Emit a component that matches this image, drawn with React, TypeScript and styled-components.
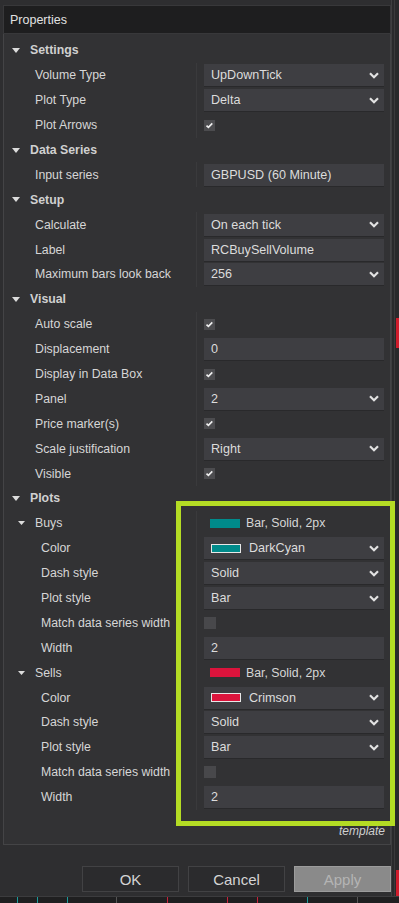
import styled, { createGlobalStyle } from 'styled-components'

const GlobalStyle = createGlobalStyle`
  body {
    margin: 0;
    background: #2a2a2c;
    font-family: "Liberation Sans", Arial, sans-serif;
  }
`

const Screen = styled.div`
  position: relative;
  width: 399px;
  height: 903px;
  display: flex;
  flex-direction: column;
  overflow: hidden;
  background: #2a2a2c;
`

const Top = styled.div`
  display: flex;
  height: 897px;
`

const Dialog = styled.div`
  width: 388px;
  padding: 5px 0 0 3px;
  display: flex;
  flex-direction: column;
  background: #2e2e30;
  border-right: 1px solid #3e3e40;
`

const Sliver = styled.div`
  position: relative;
  flex: 1;
  background: #29292b;
  border-left: 1px solid #3a3a3c;
  margin-left: 2px;
`

const ChartMark = styled.div<{ $top: number; $height: number }>`
  position: absolute;
  right: 0;
  top: ${p => p.$top}px;
  width: 3px;
  height: ${p => p.$height}px;
  background: #d01c2c;
`

const TitleBar = styled.div`
  height: 27px;
  display: flex;
  align-items: center;
  padding-left: 6px;
  background: #1e1e1f;
  border: 1px solid #38383a;
  color: #e2e2e2;
  font-size: 12.5px;
`

const Grid = styled.div`
  height: 806px;
  display: flex;
  flex-direction: column;
  padding-top: 4px;
  border: 1px solid #444446;
  border-top: none;
  background: #323234;
`

const Row = styled.div`
  height: 24.9px;
  display: grid;
  grid-template-columns: 192px 1fr;
  align-items: stretch;
`

const Label = styled.div<{ $indent: number; $bold?: boolean }>`
  display: flex;
  align-items: center;
  gap: 10px;
  padding-left: ${p => p.$indent}px;
  color: ${p => (p.$bold ? '#d0d0d0' : '#d6d6d6')};
  font-size: 12.3px;
  font-weight: ${p => (p.$bold ? 700 : 400)};
  white-space: nowrap;
`

const Value = styled.div<{ $line?: boolean }>`
  display: flex;
  align-items: center;
  padding: 0 6px 0 7px;
  border-left: 1px solid ${p => (p.$line ? '#3a3a3c' : 'transparent')};
`

const Box = styled.div`
  flex: 1;
  height: 22px;
  display: flex;
  align-items: center;
  gap: 8px;
  padding: 0 5px 0 7px;
  background: #3e3e42;
  box-shadow: 0 1px 0 #29292b;
  color: #dcdcdc;
  font-size: 12.6px;
`

const BoxText = styled.span`
  flex: 1;
`

const Swatch = styled.span<{ $color: string; $framed?: boolean }>`
  width: ${p => (p.$framed ? 28 : 30)}px;
  height: ${p => (p.$framed ? 7 : 9)}px;
  background: ${p => p.$color};
  border: ${p => (p.$framed ? '1px solid #e8e8e8' : 'none')};
  flex-shrink: 0;
`

const Summary = styled.div`
  display: flex;
  align-items: center;
  gap: 6px;
  padding-left: 6px;
  color: #d6d6d6;
  font-size: 12.3px;
`

const Template = styled.div`
  margin-top: auto;
  padding: 0 5px 6px 0;
  text-align: right;
  color: #cfcfcf;
  font-size: 12px;
  font-style: italic;
`

const Footer = styled.div`
  display: flex;
  justify-content: flex-end;
  gap: 9px;
  padding: 21px 0 0;
`

const Button = styled.div<{ $disabled?: boolean }>`
  width: 95px;
  height: 24px;
  display: flex;
  align-items: center;
  justify-content: center;
  background: ${p => (p.$disabled ? '#8a8a8a' : '#2b2b2d')};
  border: 1px solid ${p => (p.$disabled ? '#9c9c9c' : '#424244')};
  color: ${p => (p.$disabled ? '#b4b4b4' : '#d4d4d4')};
  font-size: 15px;
`

const Bottom = styled.div`
  position: relative;
  height: 6px;
  background: #1f1f20;
  border-top: 1px solid #3c3c3e;
`

const Tick = styled.div<{ $x: number; $color: string }>`
  position: absolute;
  left: ${p => p.$x}px;
  top: 0;
  width: 1px;
  height: 6px;
  background: ${p => p.$color};
`

const Highlight = styled.div`
  position: absolute;
  left: 176px;
  top: 501px;
  width: 209px;
  height: 315px;
  border: 5px solid #b4dc24;
  pointer-events: none;
`

function Caret({ small }: { small?: boolean }) {
  const w = small ? 7 : 8
  const h = small ? 4 : 5
  return (
    <svg width={w} height={h} viewBox={`0 0 ${w} ${h}`}>
      <polygon points={`0,0 ${w},0 ${w / 2},${h}`} fill="#dcdcdc" />
    </svg>
  )
}

function Chevron() {
  return (
    <svg width="10" height="7" viewBox="0 0 10 7">
      <polyline points="1,1.2 5,5.2 9,1.2" fill="none" stroke="#e2e2e2" strokeWidth="2.2" />
    </svg>
  )
}

function Check({ on }: { on: boolean }) {
  if (!on) {
    return (
      <svg width="12" height="12" viewBox="0 0 12 12">
        <rect width="12" height="12" fill="#48484b" />
      </svg>
    )
  }
  return (
    <svg width="11" height="11" viewBox="0 0 11 11">
      <rect width="11" height="11" fill="#4c4c4f" />
      <polyline points="2.5,5.6 4.4,7.4 8.3,3.4" fill="none" stroke="#f0f0f0" strokeWidth="1.6" />
    </svg>
  )
}

type Item =
  | { kind: 'cat'; label: string }
  | { kind: 'group'; label: string; color: string }
  | { kind: 'select' | 'text'; label: string; value: string; sub?: boolean; swatch?: string }
  | { kind: 'check'; label: string; on: boolean; sub?: boolean }

const plot = (name: string, color: string, colorName: string): Item[] => [
  { kind: 'group', label: name, color },
  { kind: 'select', label: 'Color', value: colorName, swatch: color, sub: true },
  { kind: 'select', label: 'Dash style', value: 'Solid', sub: true },
  { kind: 'select', label: 'Plot style', value: 'Bar', sub: true },
  { kind: 'check', label: 'Match data series width', on: false, sub: true },
  { kind: 'text', label: 'Width', value: '2', sub: true },
]

const items: Item[] = [
  { kind: 'cat', label: 'Settings' },
  { kind: 'select', label: 'Volume Type', value: 'UpDownTick' },
  { kind: 'select', label: 'Plot Type', value: 'Delta' },
  { kind: 'check', label: 'Plot Arrows', on: true },
  { kind: 'cat', label: 'Data Series' },
  { kind: 'text', label: 'Input series', value: 'GBPUSD (60 Minute)' },
  { kind: 'cat', label: 'Setup' },
  { kind: 'select', label: 'Calculate', value: 'On each tick' },
  { kind: 'text', label: 'Label', value: 'RCBuySellVolume' },
  { kind: 'select', label: 'Maximum bars look back', value: '256' },
  { kind: 'cat', label: 'Visual' },
  { kind: 'check', label: 'Auto scale', on: true },
  { kind: 'text', label: 'Displacement', value: '0' },
  { kind: 'check', label: 'Display in Data Box', on: true },
  { kind: 'select', label: 'Panel', value: '2' },
  { kind: 'check', label: 'Price marker(s)', on: true },
  { kind: 'select', label: 'Scale justification', value: 'Right' },
  { kind: 'check', label: 'Visible', on: true },
  { kind: 'cat', label: 'Plots' },
  ...plot('Buys', '#008b8b', 'DarkCyan'),
  ...plot('Sells', '#dc143c', 'Crimson'),
]

function PropertyRow({ item }: { item: Item }) {
  if (item.kind === 'cat') {
    return (
      <Row>
        <Label $indent={8} $bold>
          <Caret />
          {item.label}
        </Label>
        <Value />
      </Row>
    )
  }
  if (item.kind === 'group') {
    return (
      <Row>
        <Label $indent={14}>
          <Caret small />
          {item.label}
        </Label>
        <Value $line>
          <Summary>
            <Swatch $color={item.color} />
            Bar, Solid, 2px
          </Summary>
        </Value>
      </Row>
    )
  }
  const indent = item.sub ? 37 : 31
  return (
    <Row>
      <Label $indent={indent}>{item.label}</Label>
      <Value $line>
        {item.kind === 'check' ? (
          <Check on={item.on} />
        ) : (
          <Box>
            {item.swatch && <Swatch $color={item.swatch} $framed />}
            <BoxText>{item.value}</BoxText>
            {item.kind === 'select' && <Chevron />}
          </Box>
        )}
      </Value>
    </Row>
  )
}

const ticks = [
  { x: 17, c: '#1c9c9c' },
  { x: 37, c: '#1c9c9c' },
  { x: 67, c: '#1c9c9c' },
  { x: 116, c: '#555' },
  { x: 167, c: '#c8203a' },
  { x: 227, c: '#c8203a' },
  { x: 257, c: '#c8203a' },
  { x: 307, c: '#1c9c9c' },
  { x: 357, c: '#555' },
]

export default function App() {
  return (
    <Screen>
      <GlobalStyle />
      <Top>
        <Dialog>
          <TitleBar>Properties</TitleBar>
          <Grid>
            {items.map((item, i) => (
              <PropertyRow key={i} item={item} />
            ))}
            <Template>template</Template>
          </Grid>
          <Footer>
            <Button>OK</Button>
            <Button>Cancel</Button>
            <Button $disabled>Apply</Button>
          </Footer>
        </Dialog>
        <Sliver>
          <ChartMark $top={318} $height={30} />
          <ChartMark $top={870} $height={27} />
        </Sliver>
      </Top>
      <Bottom>
        {ticks.map(t => (
          <Tick key={t.x} $x={t.x} $color={t.c} />
        ))}
      </Bottom>
      <Highlight />
    </Screen>
  )
}
